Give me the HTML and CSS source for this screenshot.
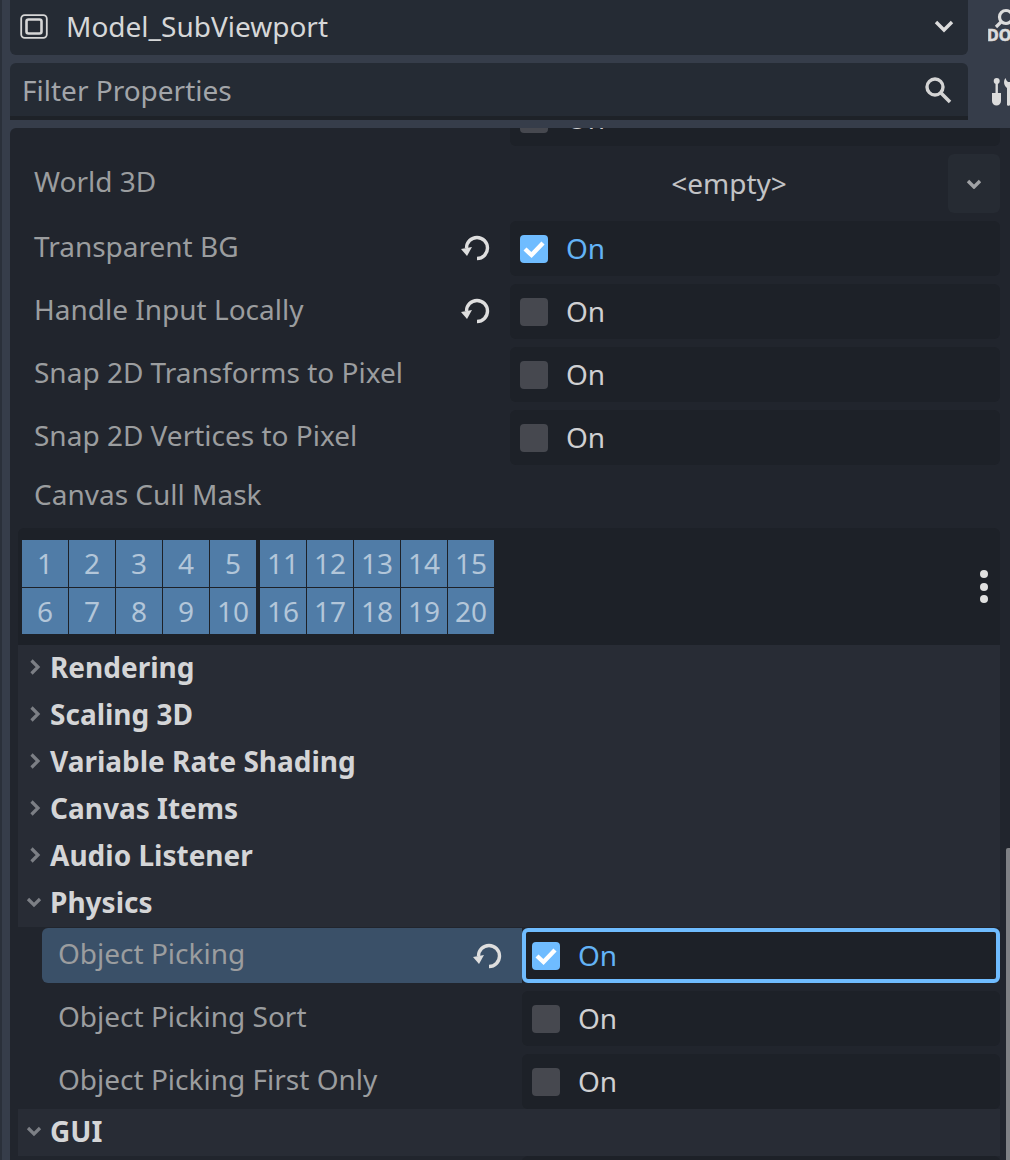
FILE: index.html
```html
<!DOCTYPE html>
<html lang="en">
<head>
  <meta charset="UTF-8">
  <title>Inspector</title>
  <link rel="stylesheet" href="styles.css">
</head>
<body>
  <div class="dock">
    <!-- Top: node picker + filter, with the cut off side tabs -->
    <div class="top">
      <div class="top-fields">
        <div class="node-picker">
          <svg class="node-icon" width="28" height="26" viewBox="0 0 28 26">
            <rect x="1.2" y="1.2" width="25.6" height="22.6" rx="3.5" fill="none" stroke="#d6d6d6" stroke-width="1.8"/>
            <rect x="6.5" y="5.5" width="15" height="14" rx="2" fill="none" stroke="#d6d6d6" stroke-width="2.6"/>
          </svg>
          <span class="node-name">Model_SubViewport</span>
          <svg class="node-arrow" width="22" height="14" viewBox="0 0 22 14">
            <path d="M3 3 L11 11 L19 3" fill="none" stroke="#dcdcdc" stroke-width="3.4"/>
          </svg>
        </div>
        <div class="filter">
          <span class="filter-text">Filter Properties</span>
          <svg width="28" height="28" viewBox="0 0 28 28">
            <circle cx="11" cy="11" r="8" fill="none" stroke="#d4d4d4" stroke-width="3.4"/>
            <path d="M17 17 L26 26" fill="none" stroke="#d4d4d4" stroke-width="3.6"/>
          </svg>
        </div>
      </div>
      <div class="side-tabs">
        <svg class="side-icon" width="22" height="42" viewBox="0 0 22 42">
          <circle cx="18" cy="15" r="6.5" fill="none" stroke="#dcdcdc" stroke-width="3.2"/>
          <path d="M13 20 L8 25" fill="none" stroke="#dcdcdc" stroke-width="3.2"/>
          <text x="-1" y="39" class="doc-text">DOC</text>
        </svg>
        <svg class="side-icon tools" width="20" height="30" viewBox="0 0 20 30">
          <circle cx="6.7" cy="4" r="3" fill="#dcdcdc"/>
          <rect x="5.5" y="5" width="2.4" height="12" fill="#dcdcdc"/>
          <path d="M2 16 H11 V24 A4.5 4.5 0 0 1 2 24 Z" fill="#dcdcdc"/>
          <path d="M15.5 1 C13 4 14 9 17 11 V28 A2 2 0 0 0 20 28 V5 H18 C17 4 16 3 15.5 1 Z" fill="#dcdcdc"/>
        </svg>
      </div>
    </div>

    <div class="panel">
      <div class="scroll-content">
        <div class="row">
          <div class="label"></div>
          <div class="value"><span class="check"></span><span class="on">On</span></div>
        </div>

        <div class="row row-res">
          <div class="label">World 3D</div>
          <div class="res-value">
            <span class="res-name">&lt;empty&gt;</span>
            <span class="res-arrow">
              <svg width="16" height="10" viewBox="0 0 16 10"><path d="M2 2 L8 8 L14 2" fill="none" stroke="#a0a2a5" stroke-width="3.4"/></svg>
            </span>
          </div>
        </div>

        <div class="row">
          <div class="label">Transparent BG
            <svg class="reset" width="30" height="28" viewBox="0 0 30 28"><path d="M6.5 14 A10.5 10.5 0 1 1 17 24.5" fill="none" stroke="#dedede" stroke-width="3.4"/><path d="M1 15 L12 13 L7 22 Z" fill="#dedede"/></svg>
          </div>
          <div class="value"><span class="check checked"><svg width="28" height="28" viewBox="0 0 28 28"><path d="M5 14 L11.5 20 L23 8" fill="none" stroke="#fff" stroke-width="4.4"/></svg></span><span class="on on-active">On</span></div>
        </div>
        <div class="row">
          <div class="label">Handle Input Locally
            <svg class="reset" width="30" height="28" viewBox="0 0 30 28"><path d="M6.5 14 A10.5 10.5 0 1 1 17 24.5" fill="none" stroke="#dedede" stroke-width="3.4"/><path d="M1 15 L12 13 L7 22 Z" fill="#dedede"/></svg>
          </div>
          <div class="value"><span class="check"></span><span class="on">On</span></div>
        </div>
        <div class="row">
          <div class="label">Snap 2D Transforms to Pixel</div>
          <div class="value"><span class="check"></span><span class="on">On</span></div>
        </div>
        <div class="row">
          <div class="label">Snap 2D Vertices to Pixel</div>
          <div class="value"><span class="check"></span><span class="on">On</span></div>
        </div>

        <div class="mask-label">Canvas Cull Mask</div>
        <div class="mask">
          <div class="mask-group">
            <span>1</span><span>2</span><span>3</span><span>4</span><span>5</span>
            <span>6</span><span>7</span><span>8</span><span>9</span><span>10</span>
          </div>
          <div class="mask-group">
            <span>11</span><span>12</span><span>13</span><span>14</span><span>15</span>
            <span>16</span><span>17</span><span>18</span><span>19</span><span>20</span>
          </div>
          <div class="mask-menu"><i></i><i></i><i></i></div>
        </div>

        <div class="section"><svg width="12" height="18" viewBox="0 0 12 18"><path d="M2.5 2.5 L9 9 L2.5 15.5" fill="none" stroke="#7c7f85" stroke-width="3.2"/></svg>Rendering</div>
        <div class="section"><svg width="12" height="18" viewBox="0 0 12 18"><path d="M2.5 2.5 L9 9 L2.5 15.5" fill="none" stroke="#7c7f85" stroke-width="3.2"/></svg>Scaling 3D</div>
        <div class="section"><svg width="12" height="18" viewBox="0 0 12 18"><path d="M2.5 2.5 L9 9 L2.5 15.5" fill="none" stroke="#7c7f85" stroke-width="3.2"/></svg>Variable Rate Shading</div>
        <div class="section"><svg width="12" height="18" viewBox="0 0 12 18"><path d="M2.5 2.5 L9 9 L2.5 15.5" fill="none" stroke="#7c7f85" stroke-width="3.2"/></svg>Canvas Items</div>
        <div class="section"><svg width="12" height="18" viewBox="0 0 12 18"><path d="M2.5 2.5 L9 9 L2.5 15.5" fill="none" stroke="#7c7f85" stroke-width="3.2"/></svg>Audio Listener</div>
        <div class="section open"><svg width="16" height="12" viewBox="0 0 16 12"><path d="M2 3 L8 9 L14 3" fill="none" stroke="#7c7f85" stroke-width="3.2"/></svg>Physics</div>

        <div class="sub-rows physics-rows">
          <div class="row row-selected">
            <div class="label">Object Picking
              <svg class="reset" width="30" height="28" viewBox="0 0 30 28"><path d="M6.5 14 A10.5 10.5 0 1 1 17 24.5" fill="none" stroke="#dedede" stroke-width="3.4"/><path d="M1 15 L12 13 L7 22 Z" fill="#dedede"/></svg>
            </div>
            <div class="value value-focus"><span class="check checked"><svg width="28" height="28" viewBox="0 0 28 28"><path d="M5 14 L11.5 20 L23 8" fill="none" stroke="#fff" stroke-width="4.4"/></svg></span><span class="on on-active">On</span></div>
          </div>
          <div class="row">
            <div class="label">Object Picking Sort</div>
            <div class="value"><span class="check"></span><span class="on">On</span></div>
          </div>
          <div class="row">
            <div class="label">Object Picking First Only</div>
            <div class="value"><span class="check"></span><span class="on">On</span></div>
          </div>
        </div>

        <div class="section open"><svg width="16" height="12" viewBox="0 0 16 12"><path d="M2 3 L8 9 L14 3" fill="none" stroke="#7c7f85" stroke-width="3.2"/></svg>GUI</div>
        <div class="sub-rows">
          <div class="row">
            <div class="label"></div>
            <div class="value"></div>
          </div>
        </div>
      </div>
      <div class="scroll-thumb"></div>
    </div>
  </div>
</body>
</html>
```

FILE: styles.css
```css
* {
  margin: 0; padding: 0; box-sizing: border-box;
}

html, body {
  height: 100%;
  overflow: hidden;
}

body {
  background: #363d4a;
  font-family: 'Noto Sans', sans-serif;
  font-size: 28px;
  color: #9b9d9f;
}

.dock {
  height: 1160px;
  padding-left: 10px;
  border-left: 2px solid #2a303a;
  display: flex;
  flex-direction: column;
  width: 1010px;
  overflow: hidden;
}

/* top fields */
.top {
  display: flex;
  height: 128px;
  margin-left: -2px;
}

.top-fields {
  width: 958px;
  display: flex;
  flex-direction: column;
  gap: 8px;
}

.node-picker {
  height: 55px;
  background: #252b34;
  border-radius: 0 0 6px 6px;
  display: flex;
  align-items: center;
  padding: 0 13px 0 10px;
  color: #d6d7d8;
}

.node-icon { margin-top: -2px; }

.node-name {
  margin-left: 18px;
  flex: 1;
  margin-top: -3px;
}

.node-arrow { margin-top: -4px; }

.filter {
  height: 57px;
  background: #252b34;
  border-radius: 6px 6px 0 0;
  border-bottom: 4px solid #1e2228;
  display: flex;
  align-items: center;
  justify-content: space-between;
  padding: 0 16px 0 12px;
}

.filter-text { color: #a2a5a9; margin-top: 1px; }

.side-tabs {
  flex: 1;
  overflow: hidden;
  display: flex;
  flex-direction: column;
  padding: 2px 0 0 20px;
  gap: 33px;
}

.side-icon { flex: none; overflow: hidden; }

.side-tabs .tools { margin-left: 2px; }

.doc-text {
  font-family: 'Noto Sans', sans-serif;
  font-weight: 700;
  font-size: 16px;
  fill: #dcdcdc;
  stroke: #dcdcdc;
  stroke-width: 0.6px;
}

/* inspector panel */
.panel {
  position: relative;
  flex: 1;
  margin-left: -2px;
  background: #21252d;
  border-radius: 6px 0 0 0;
  overflow: hidden;
  padding: 0 10px 0 8px;
}

.scroll-content {
  margin-top: -37px;
  display: flex;
  flex-direction: column;
  gap: 8px;
}

.row {
  display: flex;
  height: 55px;
}

.label {
  width: 492px;
  padding: 0 20px 0 16px;
  display: flex;
  align-items: center;
  justify-content: space-between;
  height: 50px;
  white-space: nowrap;
}

.value {
  flex: 1;
  background: #1d2128;
  border-radius: 6px;
  display: flex;
  align-items: center;
  padding-left: 10px;
  color: #cfd0d2;
}

.check {
  width: 28px;
  height: 28px;
  border-radius: 4px;
  background: #46484f;
  flex: none;
}

.checked { background: #6fbcff; }

.check svg { display: block; }

.on { margin-left: 18px; margin-top: -2px; line-height: 1; }

.on-active { color: #63b3f6; }

.res-value {
  flex: 1;
  display: flex;
  align-items: center;
  color: #c2c3c5;
}

.res-name {
  flex: 1;
  text-align: center;
  margin-top: -2px;
}

.res-arrow {
  width: 52px;
  height: 59px;
  background: #262b33;
  border-radius: 6px;
  display: flex;
  align-items: center;
  justify-content: center;
}

.row-res { height: 59px; }

.row-res .label { height: 53px; }

.mask-label {
  padding-left: 16px;
  height: 50px;
  margin-top: -4px;
  display: flex;
  align-items: center;
}

.mask {
  height: 117px;
  background: #1d2128;
  border-radius: 6px 6px 0 0;
  display: flex;
  gap: 4px;
  padding: 12px 4px 0;
  margin-top: 1px;
}

.mask-group {
  display: grid;
  grid-template-columns: repeat(5, 46px);
  grid-template-rows: 47px 46px;
  gap: 1px;
  height: 94px;
}

.mask-group span {
  background: #507ca7;
  color: #b3c6d9;
  display: flex;
  align-items: center;
  justify-content: center;
}

.mask-group span:nth-child(-n+5) { padding-bottom: 2px; }

.mask-menu {
  margin-left: auto;
  margin-right: 8px;
  margin-top: 30px;
  display: flex;
  flex-direction: column;
  gap: 4.5px;
}

.mask-menu i {
  display: block;
  width: 8px;
  height: 8px;
  border-radius: 50%;
  background: #e0e0e0;
}

.section {
  height: 47px;
  background: #282c35;
  display: flex;
  align-items: center;
  gap: 9px;
  padding-left: 11px;
  padding-bottom: 4px;
  font-weight: 700;
  color: #d4d5d7;
  margin-top: -8px;
}

.section.open { gap: 8px; padding-left: 8px; }

.sub-rows {
  padding-left: 24px;
  display: flex;
  flex-direction: column;
  gap: 8px;
  margin-top: -8px;
}

.physics-rows { margin-top: -7px; }

.sub-rows .label { width: 480px; }

.row-selected .label {
  background: #3a5068;
  height: 55px;
  border-radius: 6px 0 0 6px;
  padding-bottom: 5px;
}

.row-selected .reset { margin-top: 5px; }

.reset { flex: none; margin-top: 4px; }

.value-focus {
  border: 4px solid #6fbcff;
  padding-left: 6px;
}

.scroll-thumb {
  position: absolute;
  right: 0;
  top: 720px;
  bottom: 0;
  width: 4px;
  background: #7e8084;
  border-radius: 2px 0 0 0;
}
```
